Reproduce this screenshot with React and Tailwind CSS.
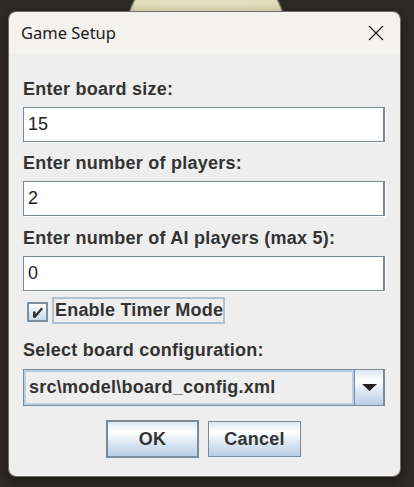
import { useState } from 'react'

const label = "h-[21px] leading-[21px] text-[18px] font-bold tracking-[0.25px] text-[#333333] whitespace-nowrap"
const btnBg = "bg-[linear-gradient(to_bottom,#dde8f3_0%,#ffffff_30%,#dde8f3_60%,#b8cfe5_100%)]"

function Field({ value, className = '' }) {
  return (
    <div className={`h-[35px] flex items-center bg-white border-t border-l border-b border-r-2 border-[#7a8a99] shadow-[1px_1px_0_#ffffff] pl-[4px] text-[18px] text-[#222222] ${className}`}>
      {value}
    </div>
  )
}

export default function App() {
  const [timer, setTimer] = useState(true)

  return (
    <div
      className="w-full min-h-[487px] pt-[11px] pl-[8px] bg-[#2e2a27] bg-[radial-gradient(circle_82px_at_206px_38px,#e9e6c5_0%,#e4e0bb_97%,transparent_100%)]"
      style={{ fontFamily: '"Liberation Sans", Arial, sans-serif' }}
    >
      <div className="w-[393px] h-[466px] flex flex-col rounded-[8px] overflow-hidden border border-[#6f6b67] shadow-[0_4px_14px_rgba(0,0,0,0.45)]">
        {/* Title bar */}
        <div className="h-[42px] shrink-0 flex items-center justify-between pl-[12px] pr-[16px] bg-[#f4f2ef]">
          <span className="text-[16.5px] text-[#1a1a1a]" style={{ fontFamily: '"Noto Sans", "Open Sans", sans-serif' }}>
            Game Setup
          </span>
          <svg width="16" height="16" viewBox="0 0 16 16" className="mt-[-1px]">
            <path d="M1 1L15 15M15 1L1 15" stroke="#1a1a1a" strokeWidth="1.2" fill="none" />
          </svg>
        </div>

        {/* Body */}
        <div className="flex-1 flex flex-col bg-[#eeeeee] pl-[14px] pr-[15px] pt-[25px]">
          <div className={label}>Enter board size:</div>
          <Field value="15" className="mt-[7px]" />

          <div className={`${label} mt-[11px]`}>Enter number of players:</div>
          <Field value="2" className="mt-[7px]" />

          <div className={`${label} mt-[12px]`}>Enter number of AI players (max 5):</div>
          <Field value="0" className="mt-[7px]" />

          {/* Checkbox */}
          <div className="mt-[6px] h-[27px] flex items-center pl-[4px]" onClick={() => setTimer(!timer)}>
            <div className="w-[21px] h-[20px] mt-[3px] border-2 border-[#7d8fa1] bg-[linear-gradient(to_bottom,#ffffff,#dde8f3_60%,#c8d9ea)] flex items-center justify-center">
              {timer && (
                <svg width="17" height="16" viewBox="0 0 17 16">
                  <path d="M4 7.5 L6.6 7.5 L6.6 10.2 L12.2 3.6 L14 5 L6.6 13.8 L4 13.8 Z" fill="#333333" />
                </svg>
              )}
            </div>
            <div className="ml-[4px] h-[27px] pl-[1px] flex items-center border-2 border-[#aec2d6] text-[18px] font-bold tracking-[0.2px] text-[#333333] whitespace-nowrap">
              Enable Timer Mode
            </div>
          </div>

          <div className={`${label} mt-[16px]`}>Select board configuration:</div>

          {/* Combo */}
          <div className="mt-[8px] h-[37px] flex border border-[#7a8a99] border-r-2">
            <div className="flex-1 flex items-center bg-[#eeeeee] border-2 border-[#b8cfe5] pl-[3px] text-[18px] font-bold tracking-[0.25px] text-[#333333] whitespace-nowrap">
              src\model\board_config.xml
            </div>
            <div className={`w-[29px] flex items-center justify-center border-l border-[#7a8a99] ${btnBg}`}>
              <svg width="15" height="7" viewBox="0 0 15 7">
                <path d="M0 0H15L7.5 7Z" fill="#222222" />
              </svg>
            </div>
          </div>

          {/* Buttons */}
          <div className="mt-[14px] flex items-center justify-center gap-[9px] pr-[1px]">
            <button className={`w-[93px] h-[38px] border-2 border-[#7a8a99] ${btnBg} text-[18px] font-bold tracking-[0.25px] text-[#333333]`}>
              OK
            </button>
            <button className={`w-[93px] h-[36px] border border-[#7a8a99] ${btnBg} text-[18px] font-bold tracking-[0.25px] text-[#333333]`}>
              Cancel
            </button>
          </div>
        </div>
      </div>
    </div>
  )
}
